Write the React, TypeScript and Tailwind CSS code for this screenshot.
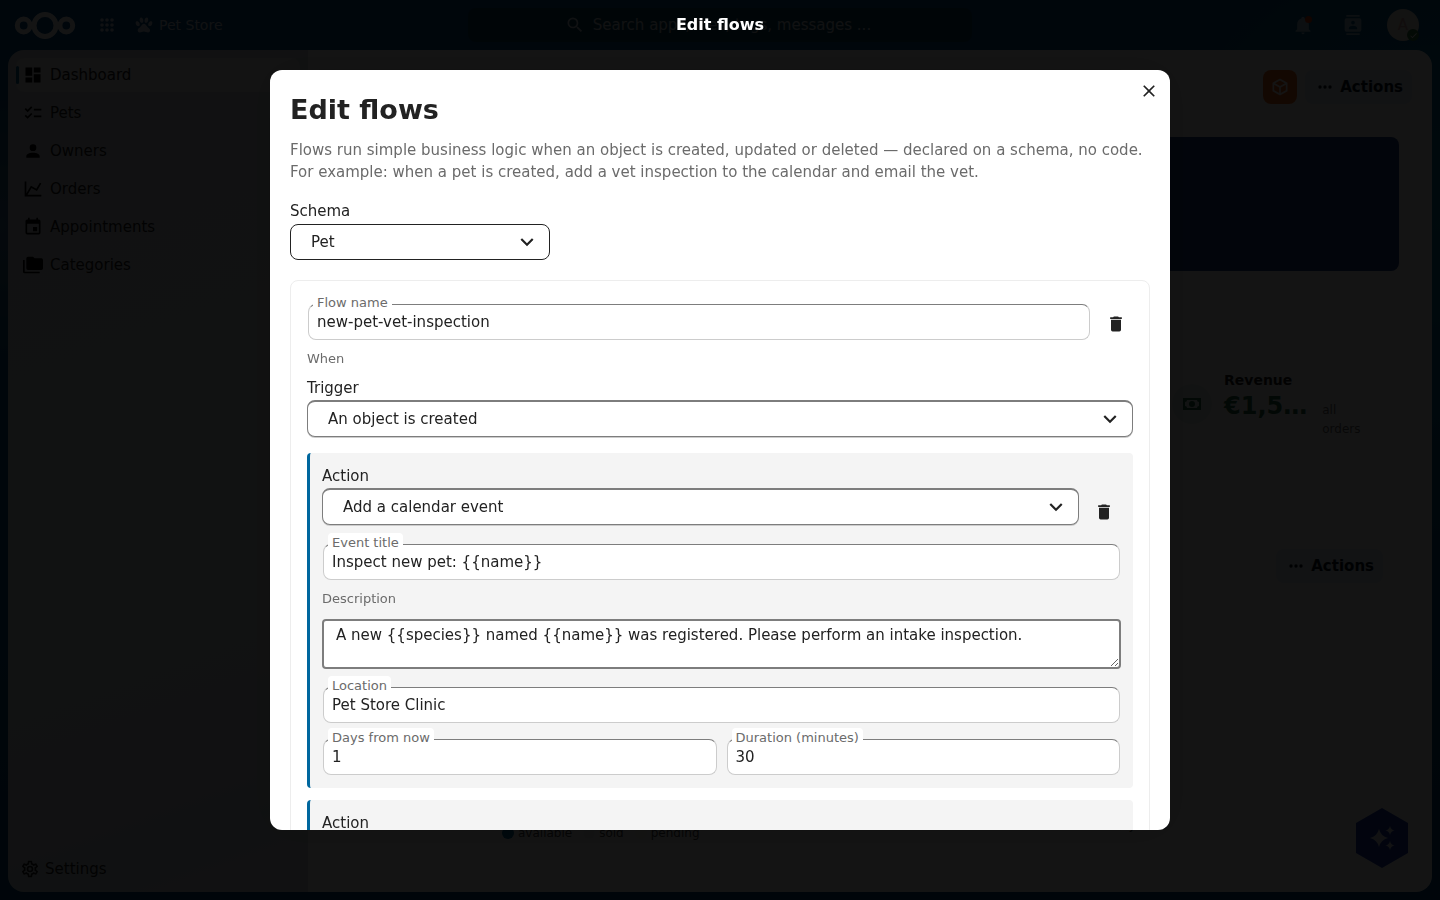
import { useState } from "react";
import type { ReactNode } from "react";
import { MdChecklist } from "react-icons/md";

// Material icon paths, all on a 24x24 grid
const icons = {
  dashboard: "M13,3V9H21V3M13,21H21V11H13M3,21H11V15H3M3,13H11V3H3V13Z",
  account:
    "M12,4A4,4 0 0,1 16,8A4,4 0 0,1 12,12A4,4 0 0,1 8,8A4,4 0 0,1 12,4M12,14C16.42,14 20,15.79 20,18V20H4V18C4,15.79 7.58,14 12,14Z",
  chart:
    "M16,11.78L20.24,4.45L21.97,5.45L16.74,14.5L10.23,10.75L5.46,19H22V21H2V3H4V17.54L9.5,8L16,11.78Z",
  calendar:
    "M19,19H5V8H19M16,1V3H8V1H6V3H5C3.89,3 3,3.89 3,5V19A2,2 0 0,0 5,21H19A2,2 0 0,0 21,19V5C21,3.89 20.1,3 19,3H18V1M17,12H12V17H17V12Z",
  folders:
    "M22,4H14L12,2H6A2,2 0 0,0 4,4V16A2,2 0 0,0 6,18H22A2,2 0 0,0 24,16V6A2,2 0 0,0 22,4M2,6H0V11H0V20A2,2 0 0,0 2,22H20V20H2V6Z",
  cog: "M12,8A4,4 0 0,1 16,12A4,4 0 0,1 12,16A4,4 0 0,1 8,12A4,4 0 0,1 12,8M12,10A2,2 0 0,0 10,12A2,2 0 0,0 12,14A2,2 0 0,0 14,12A2,2 0 0,0 12,10M10,22C9.75,22 9.54,21.82 9.5,21.58L9.13,18.93C8.5,18.68 7.96,18.34 7.44,17.94L4.95,18.95C4.73,19.03 4.46,18.95 4.34,18.73L2.34,15.27C2.21,15.05 2.27,14.78 2.46,14.63L4.57,12.97L4.5,12L4.57,11L2.46,9.37C2.27,9.22 2.21,8.95 2.34,8.73L4.34,5.27C4.46,5.05 4.73,4.96 4.95,5.05L7.44,6.05C7.96,5.66 8.5,5.32 9.13,5.07L9.5,2.42C9.54,2.18 9.75,2 10,2H14C14.25,2 14.46,2.18 14.5,2.42L14.87,5.07C15.5,5.32 16.04,5.66 16.56,6.05L19.05,5.05C19.27,4.96 19.54,5.05 19.66,5.27L21.66,8.73C21.79,8.95 21.73,9.22 21.54,9.37L19.43,11L19.5,12L19.43,13L21.54,14.63C21.73,14.78 21.79,15.05 21.66,15.27L19.66,18.73C19.54,18.95 19.27,19.04 19.05,18.95L16.56,17.95C16.04,18.34 15.5,18.68 14.87,18.93L14.5,21.58C14.46,21.82 14.25,22 14,22H10M11.25,4L10.88,6.61C9.68,6.86 8.62,7.5 7.85,8.39L5.44,7.35L4.69,8.65L6.8,10.2C6.4,11.37 6.4,12.64 6.8,13.8L4.68,15.36L5.43,16.66L7.86,15.62C8.63,16.5 9.68,17.14 10.87,17.38L11.24,20H12.76L13.13,17.39C14.32,17.14 15.37,16.5 16.14,15.62L18.57,16.66L19.32,15.36L17.2,13.81C17.6,12.64 17.6,11.37 17.2,10.2L19.31,8.65L18.56,7.35L16.15,8.39C15.38,7.5 14.32,6.86 13.12,6.62L12.75,4H11.25Z",
  trash:
    "M19,4H15.5L14.5,3H9.5L8.5,4H5V6H19M6,19A2,2 0 0,0 8,21H16A2,2 0 0,0 18,19V7H6V19Z",
  close:
    "M19,6.41L17.59,5L12,10.59L6.41,5L5,6.41L10.59,12L5,17.59L6.41,19L12,13.41L17.59,19L19,17.59L13.41,12L19,6.41Z",
  chevron: "M7.41,8.58L12,13.17L16.59,8.58L18,10L12,16L6,10L7.41,8.58Z",
  dots: "M16,12A2,2 0 0,1 18,10A2,2 0 0,1 20,12A2,2 0 0,1 18,14A2,2 0 0,1 16,12M10,12A2,2 0 0,1 12,10A2,2 0 0,1 14,12A2,2 0 0,1 12,14A2,2 0 0,1 10,12M4,12A2,2 0 0,1 6,10A2,2 0 0,1 8,12A2,2 0 0,1 6,14A2,2 0 0,1 4,12Z",
  cube: "M21,16.5C21,16.88 20.79,17.21 20.47,17.38L12.57,21.82C12.41,21.94 12.21,22 12,22C11.79,22 11.59,21.94 11.43,21.82L3.53,17.38C3.21,17.21 3,16.88 3,16.5V7.5C3,7.12 3.21,6.79 3.53,6.62L11.43,2.18C11.59,2.06 11.79,2 12,2C12.21,2 12.41,2.06 12.57,2.18L20.47,6.62C20.79,6.79 21,7.12 21,7.5V16.5M12,4.15L6.04,7.5L12,10.85L17.96,7.5L12,4.15M5,15.91L11,19.29V12.58L5,9.21V15.91M19,15.91V9.21L13,12.58V19.29L19,15.91Z",
  paw: "M8.35,3C9.53,2.83 10.78,4.12 11.14,5.9C11.5,7.67 10.85,9.25 9.67,9.43C8.5,9.61 7.24,8.32 6.87,6.54C6.5,4.77 7.17,3.19 8.35,3M15.5,3C16.69,3.19 17.35,4.77 17,6.54C16.62,8.32 15.37,9.61 14.19,9.43C13,9.25 12.35,7.67 12.72,5.9C13.08,4.12 14.33,2.83 15.5,3M3,7.6C4.14,7.11 5.69,8 6.5,9.55C7.26,11.13 7,12.79 5.87,13.28C4.74,13.77 3.2,12.89 2.41,11.32C1.62,9.75 1.9,8.08 3,7.6M21,7.6C22.1,8.08 22.38,9.75 21.59,11.32C20.8,12.89 19.26,13.77 18.13,13.28C17,12.79 16.74,11.13 17.5,9.55C18.31,8 19.86,7.11 21,7.6M19.33,18.38C19.37,19.32 18.65,20.36 17.79,20.75C16,21.57 13.88,19.87 11.89,19.87C9.9,19.87 7.76,21.64 6,20.75C5,20.26 4.31,18.96 4.44,17.88C4.62,16.39 6.41,15.59 7.47,14.5C8.88,13.09 9.88,10.44 11.89,10.44C13.89,10.44 14.95,13.05 16.3,14.5C17.41,15.72 19.26,16.75 19.33,18.38Z",
  search:
    "M9.5,3A6.5,6.5 0 0,1 16,9.5C16,11.11 15.41,12.59 14.44,13.73L14.71,14H15.5L20.5,19L19,20.5L14,15.5V14.71L13.73,14.44C12.59,15.41 11.11,16 9.5,16A6.5,6.5 0 0,1 3,9.5A6.5,6.5 0 0,1 9.5,3M9.5,5C7,5 5,7 5,9.5C5,12 7,14 9.5,14C12,14 14,12 14,9.5C14,7 12,5 9.5,5Z",
  bell: "M21,19V20H3V19L5,17V11C5,7.9 7.03,5.17 10,4.29C10,4.19 10,4.1 10,4A2,2 0 0,1 12,2A2,2 0 0,1 14,4C14,4.1 14,4.19 14,4.29C16.97,5.17 19,7.9 19,11V17L21,19M14,21A2,2 0 0,1 12,23A2,2 0 0,1 10,21",
  contacts:
    "M20,0H4V2H20V0M4,24H20V22H4V24M20,4H4A2,2 0 0,0 2,6V18A2,2 0 0,0 4,20H20A2,2 0 0,0 22,18V6A2,2 0 0,0 20,4M12,6.75A2.25,2.25 0 0,1 14.25,9A2.25,2.25 0 0,1 12,11.25A2.25,2.25 0 0,1 9.75,9A2.25,2.25 0 0,1 12,6.75M17,17H7V15.5C7,13.83 10.33,13 12,13C13.67,13 17,13.83 17,15.5V17Z",
  cash: "M3,6H21V18H3V6M12,9A3,3 0 0,1 15,12A3,3 0 0,1 12,15A3,3 0 0,1 9,12A3,3 0 0,1 12,9M7,8A2,2 0 0,1 5,10V14A2,2 0 0,1 7,16H17A2,2 0 0,1 19,14V10A2,2 0 0,1 17,8H7Z",
  check: "M21,7L9,19L3.5,13.5L4.91,12.09L9,16.17L19.59,5.59L21,7Z",
};

function Icon({ name, size = 20 }: { name: keyof typeof icons; size?: number }) {
  return (
    <svg width={size} height={size} viewBox="0 0 24 24" fill="currentColor" aria-hidden="true" className="shrink-0">
      <path d={icons[name]} />
    </svg>
  );
}

const navItems: { label: string; icon: ReactNode }[] = [
  { label: "Dashboard", icon: <Icon name="dashboard" /> },
  { label: "Pets", icon: <MdChecklist size={20} /> },
  { label: "Owners", icon: <Icon name="account" /> },
  { label: "Orders", icon: <Icon name="chart" /> },
  { label: "Appointments", icon: <Icon name="calendar" /> },
  { label: "Categories", icon: <Icon name="folders" /> },
];

function TextField({ id, label, value }: { id: string; label: string; value: string }) {
  const [text, setText] = useState(value);
  return (
    <div className="relative min-w-0 flex-1 px-px pt-[7px] pb-px">
      <input
        id={id}
        type="text"
        value={text}
        onChange={(e) => setText(e.target.value)}
        className="block h-9 w-full rounded-lg border border-[#cccccc] border-t-[#7d7d7d] bg-white px-2 text-[15px] text-[#222222]"
      />
      <label
        htmlFor={id}
        className="absolute top-[-4px] left-[6px] rounded bg-white px-1 text-[13px] leading-5 text-[#6b6b6b]"
      >
        {label}
      </label>
    </div>
  );
}

function SelectField({
  id,
  label,
  options,
  plain,
}: {
  id: string;
  label: string;
  options: string[];
  plain?: boolean;
}) {
  return (
    <div className="min-w-0 flex-1 pb-1">
      <label htmlFor={id} className="block leading-[22px]">
        {label}
      </label>
      <div className={plain ? "relative mt-[2px]" : "relative mt-px"}>
        <select
          id={id}
          className={
            plain
              ? "block h-9 w-full appearance-none rounded-lg border border-[#222222] bg-white px-5"
              : "block h-[37px] w-full appearance-none rounded-lg border border-t-2 border-[#7d7d7d] bg-white px-5 shadow-[0_1px_0_#cccccc]"
          }
        >
          {options.map((o) => (
            <option key={o}>{o}</option>
          ))}
        </select>
        <span className="pointer-events-none absolute inset-y-0 right-[10px] flex items-center">
          <Icon name="chevron" size={26} />
        </span>
      </div>
    </div>
  );
}

function DeleteButton({ label }: { label: string }) {
  return (
    <button type="button" aria-label={label} className="flex size-[34px] shrink-0 items-center justify-center rounded-lg hover:bg-gray-100">
      <Icon name="trash" />
    </button>
  );
}

function ActionsButton() {
  return (
    <button type="button" className="flex h-[34px] items-center gap-[5px] rounded-lg bg-[#e0e8f4] pr-[9px] pl-[10px] font-bold text-[#00141f]">
      <Icon name="dots" />
      Actions
    </button>
  );
}

function Header() {
  return (
    <header className="flex h-[50px] items-center px-[14px] text-white">
      <div className="flex flex-1 items-center">
        <a href="#home" aria-label="Home">
          <svg width="62" height="30" viewBox="0 0 62 30" fill="none" stroke="currentColor" strokeWidth="5">
            <circle cx="9.7" cy="15.5" r="6.4" />
            <circle cx="31" cy="15.5" r="11" />
            <circle cx="52.3" cy="15.5" r="6.4" />
          </svg>
        </a>
        <button type="button" aria-label="Apps" className="ml-6">
          <svg width="14" height="14" viewBox="0 0 14 14" fill="currentColor" className="opacity-80">
            {[2, 7, 12].map((y) => [2, 7, 12].map((x) => <circle key={`${x}-${y}`} cx={x} cy={y} r="1.8" />))}
          </svg>
        </button>
        <a href="#pet-store" className="ml-5 flex items-center gap-[5px] text-sm text-white/80">
          <Icon name="paw" />
          Pet Store
        </a>
      </div>
      <button type="button" className="flex h-[34px] w-[504px] items-center justify-center gap-2 rounded-lg bg-[#004060] pr-1 text-white/80">
        <Icon name="search" />
        Search apps, files, tags, messages ...
      </button>
      <div className="flex flex-1 items-center justify-end gap-[30px]">
        <button type="button" aria-label="Notifications" className="relative text-white/60">
          <Icon name="bell" />
          <span className="absolute top-px right-px size-[7px] rounded-full bg-[#d93402]" />
        </button>
        <button type="button" aria-label="Contacts" className="text-white/60">
          <Icon name="contacts" />
        </button>
        <button type="button" aria-label="Account" className="relative mr-[7px] -ml-[6px] size-8 rounded-full bg-[#efe9dc] text-[#d9a0a0]">
          A
          <span className="absolute right-0 bottom-0 flex size-3 items-center justify-center rounded-full bg-[#2d7b41] text-white">
            <Icon name="check" size={9} />
          </span>
        </button>
      </div>
    </header>
  );
}

function Sidebar() {
  return (
    <nav className="flex w-[300px] shrink-0 flex-col bg-[linear-gradient(160deg,#d3d9de_0%,#dadce2_35%,#dbe0dc_55%,#dadbe2_75%,#ccdbdf_90%,#d6dadd_100%)] p-2">
      <ul className="flex flex-1 flex-col gap-1">
        {navItems.map((item, i) => (
          <li key={item.label}>
            <a
              href={`#${item.label.toLowerCase()}`}
              className={
                i === 0
                  ? "relative flex h-[34px] items-center rounded-lg bg-[#e8e8ea]"
                  : "relative flex h-[34px] items-center rounded-lg"
              }
            >
              {i === 0 && <span className="absolute left-0 h-[18px] w-[3px] rounded-full bg-[#00679e]" />}
              <span className="flex w-[34px] justify-center text-black">{item.icon}</span>
              {item.label}
            </a>
          </li>
        ))}
      </ul>
      <button type="button" className="flex h-[30px] items-center gap-[5px] px-1">
        <Icon name="cog" />
        Settings
      </button>
    </nav>
  );
}

function Dashboard() {
  return (
    <main className="relative flex min-w-0 flex-1 flex-col bg-white">
      <div className="flex justify-end gap-2 px-5 pt-5">
        <button type="button" aria-label="Object store" className="flex size-[34px] items-center justify-center rounded-lg bg-[#f36c21] text-white">
          <Icon name="cube" />
        </button>
        <ActionsButton />
      </div>
      <div className="mx-[33px] mt-[33px] h-[134px] shrink-0 rounded-lg bg-[#20408c]" />
      <div className="mx-[33px] mt-[98px] flex justify-end gap-3 pr-[35px]">
        <span className="mt-[15px] flex size-10 items-center justify-center rounded-full bg-[#e4f0e9] text-[#1a6b45]">
          <Icon name="cash" size={24} />
        </span>
        <div className="w-[140px]">
          <h3 className="text-sm leading-[22px] font-bold">Revenue</h3>
          <div className="flex gap-[15px]">
            <span className="text-2xl leading-[30px] font-bold text-[#1a6b45]">€1,5…</span>
            <span className="mt-[10px] text-xs leading-[19px] text-[#6b6b6b]">all orders</span>
          </div>
        </div>
      </div>
      <div className="mx-[33px] mt-[110px] flex justify-end px-4">
        <ActionsButton />
      </div>
      <div className="mt-auto ml-[194px] flex items-end gap-[11px] pb-[51px] text-xs leading-4 text-[#444444]">
        <span className="flex items-center gap-1">
          <i className="size-3 rounded-full bg-[#00679e]" />
          available
        </span>
        <span className="flex items-center gap-1">
          <i className="size-3 rounded-full bg-[#eef3f3]" />
          sold
        </span>
        <span className="flex items-center gap-1">
          <i className="size-3 rounded-full bg-[#fbf8ee]" />
          pending
        </span>
        <span className="mr-[264px] mb-2 ml-auto">Jun 29</span>
      </div>
      <button type="button" aria-label="Assistant" className="absolute right-6 bottom-6">
        <svg width="52" height="60" viewBox="0 0 52 60">
          <path d="M26 0 52 15V45L26 60 0 45V15Z" fill="#1c3cb4" />
          <g fill="#ffffff" opacity=".85">
            <path d="M23 21Q24.800 28.200 32 30 24.800 31.800 23 39 21.200 31.800 14 30 21.200 28.200 23 21Z" />
            <path d="M34 18Q34.900 21.600 38.500 22.500 34.900 23.400 34 27 33.100 23.400 29.500 22.500 33.100 21.600 34 18Z" />
            <path d="M34 33Q34.900 36.600 38.500 37.500 34.900 38.400 34 42 33.100 38.400 29.500 37.500 33.100 36.600 34 33Z" />
          </g>
        </svg>
      </button>
    </main>
  );
}

function EditFlowsModal({ onClose }: { onClose: () => void }) {
  return (
    <div className="fixed inset-0 flex flex-col items-center bg-black/92">
      <div className="flex h-[50px] shrink-0 items-center text-base font-bold text-white">Edit flows</div>
      <div
        role="dialog"
        aria-labelledby="modal-title"
        className="relative mt-5 flex max-h-[calc(100vh-140px)] w-full max-w-[900px] flex-col overflow-hidden rounded-xl bg-white shadow-[0_0_40px_rgba(0,0,0,0.2)]"
      >
        <button
          type="button"
          aria-label="Close"
          onClick={onClose}
          className="absolute top-1 right-1 flex size-[34px] items-center justify-center rounded-lg hover:bg-gray-100"
        >
          <Icon name="close" />
        </button>
        <div className="overflow-y-auto p-5 [scrollbar-width:none]">
          <h2 id="modal-title" className="text-[27px] leading-[39px] font-bold">
            Edit flows
          </h2>
          <p className="mt-[10px] leading-[22px] text-[#6b6b6b]">
            Flows run simple business logic when an object is created, updated or deleted — declared on a schema, no
            code. For example: when a pet is created, add a vet inspection to the calendar and email the vet.
          </p>

          <div className="mt-[17px] flex w-[260px]">
            <SelectField id="schema" label="Schema" options={["Pet"]} plain />
          </div>

          {/* Flow */}
          <section className="mt-4 rounded-lg border border-[#ededed] p-4">
            <div className="flex items-end gap-2">
              <TextField id="flow-name" label="Flow name" value="new-pet-vet-inspection" />
              <DeleteButton label="Delete flow" />
            </div>
            <p className="mt-2 text-[13px] leading-5 text-[#6b6b6b]">When</p>
            <div className="mt-2 flex">
              <SelectField id="trigger" label="Trigger" options={["An object is created"]} />
            </div>

            <div className="mt-3 flex flex-col gap-2 rounded border-l-3 border-[#00679e] bg-[#f4f4f4] p-3">
              <div className="flex items-end gap-2">
                <SelectField id="action-1" label="Action" options={["Add a calendar event"]} />
                <DeleteButton label="Delete action" />
              </div>
              <div className="flex">
                <TextField id="event-title" label="Event title" value="Inspect new pet: {{name}}" />
              </div>
              <label htmlFor="description" className="text-[13px] leading-5 text-[#6b6b6b]">
                Description
              </label>
              <div className="pt-[2px] pb-[3px]">
                <textarea
                  id="description"
                  defaultValue="A new {{species}} named {{name}} was registered. Please perform an intake inspection."
                  className="block h-[50px] w-full rounded border-2 border-[#7d7d7d] bg-white px-3 py-[3px] leading-[22px] [scrollbar-width:none]"
                />
              </div>
              <div className="flex">
                <TextField id="location" label="Location" value="Pet Store Clinic" />
              </div>
              <div className="flex gap-2">
                <TextField id="days" label="Days from now" value="1" />
                <TextField id="duration" label="Duration (minutes)" value="30" />
              </div>
            </div>

            <div className="mt-3 flex items-end gap-2 rounded border-l-3 border-[#00679e] bg-[#f4f4f4] p-3">
              <SelectField id="action-2" label="Action" options={[]} />
              <DeleteButton label="Delete action" />
            </div>
          </section>
        </div>
      </div>
    </div>
  );
}

export default function App() {
  const [open, setOpen] = useState(true);

  return (
    <div className="flex min-h-screen flex-col bg-[#004b8c] bg-[radial-gradient(circle_at_100%_25%,#007a9c_0%,transparent_22%),radial-gradient(circle_at_0%_25%,#3a6f94_0%,transparent_10%),linear-gradient(180deg,#004b8c_0%,#00508c_60%,#00467d_100%)] font-['DejaVu_Sans',sans-serif] text-[15px] text-[#222222]">
      <Header />
      <div className="mx-2 mb-2 flex flex-1 overflow-hidden rounded-2xl">
        <Sidebar />
        <Dashboard />
      </div>
      {open && <EditFlowsModal onClose={() => setOpen(false)} />}
    </div>
  );
}
